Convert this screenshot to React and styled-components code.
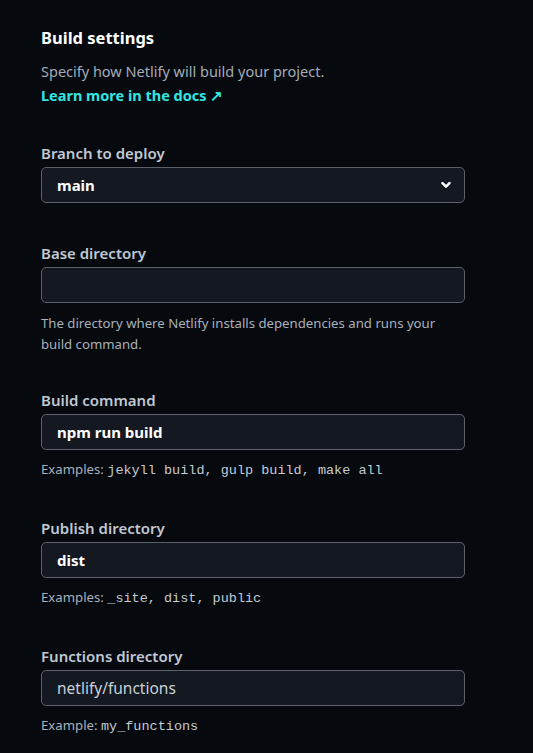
import React from 'react';
import styled, { createGlobalStyle } from 'styled-components';

const GlobalStyle = createGlobalStyle`
  html, body {
    margin: 0;
    padding: 0;
    background: #06090e;
  }
  body {
    font-family: "Noto Sans", "Open Sans", sans-serif;
    -webkit-font-smoothing: antialiased;
  }
`;

const Page = styled.div`
  width: 533px;
  min-height: 753px;
  background: #06090e;
  padding: 26px 68px 0 41px;
  box-sizing: border-box;
`;

const Title = styled.h2`
  margin: 0;
  font-size: 16.5px;
  font-weight: 700;
  color: #ffffff;
  line-height: 24px;
`;

const Intro = styled.p`
  margin: 9px 0 0;
  font-size: 14.5px;
  line-height: 24px;
  color: #a3acb6;
`;

const LinkRow = styled.p`
  margin: 0;
  line-height: 24px;
`;

const DocsLink = styled.a`
  font-size: 14.5px;
  font-weight: 700;
  color: #32e6e2;
  text-decoration: none;
`;

const Fields = styled.div`
  display: flex;
  flex-direction: column;
  margin-top: 35px;
`;

const Field = styled.div`
  display: flex;
  flex-direction: column;
  margin-bottom: ${(p) => p.$gap}px;
`;

const Label = styled.label`
  font-size: 15px;
  font-weight: 600;
  line-height: 22px;
  color: #c0c8d2;
  margin-bottom: 3px;
`;

const Box = styled.div`
  height: 36px;
  box-sizing: border-box;
  border: 1px solid #5b616b;
  border-radius: 5px;
  background: #131821;
  display: flex;
  align-items: center;
  padding: 0 15px;
`;

const Value = styled.span`
  font-size: ${(p) => (p.$placeholder ? 15.5 : 15)}px;
  font-weight: ${(p) => (p.$placeholder ? 400 : 700)};
  color: ${(p) => (p.$placeholder ? '#c9d0d8' : '#ffffff')};
  flex: 1;
`;

const Chevron = styled.svg`
  width: 12px;
  height: 12px;
  margin-right: -3px;
`;

const Help = styled.p`
  margin: ${(p) => (p.$tight ? 9 : 10)}px 0 0;
  font-size: 13.2px;
  line-height: 21px;
  color: #a9b1bb;
`;

const Code = styled.code`
  font-family: "Liberation Mono", "DejaVu Sans Mono", monospace;
  font-size: 13.5px;
  color: #c4cbd3;
`;

const fields = [
  { label: 'Branch to deploy', value: 'main', select: true, gap: 39 },
  {
    label: 'Base directory',
    value: '',
    help: 'The directory where Netlify installs dependencies and runs your build command.',
    gap: 34,
  },
  { label: 'Build command', value: 'npm run build', prefix: 'Examples:', code: 'jekyll build, gulp build, make all', gap: 36 },
  { label: 'Publish directory', value: 'dist', prefix: 'Examples:', code: '_site, dist, public', gap: 36 },
  { label: 'Functions directory', value: 'netlify/functions', placeholder: true, prefix: 'Example:', code: 'my_functions', gap: 0 },
];

export default function App() {
  return (
    <>
      <GlobalStyle />
      <Page>
        <Title>Build settings</Title>
        <Intro>Specify how Netlify will build your project.</Intro>
        <LinkRow>
          <DocsLink href="#">Learn more in the docs ↗</DocsLink>
        </LinkRow>
        <Fields>
          {fields.map((f) => (
            <Field key={f.label} $gap={f.gap}>
              <Label>{f.label}</Label>
              <Box>
                <Value $placeholder={f.placeholder}>{f.value}</Value>
                {f.select && (
                  <Chevron viewBox="0 0 12 12">
                    <path d="M2.5 4.2 L6 7.7 L9.5 4.2" fill="none" stroke="#ffffff" strokeWidth="2.6" strokeLinecap="round" strokeLinejoin="round" />
                  </Chevron>
                )}
              </Box>
              {f.help && <Help>{f.help}</Help>}
              {f.code && (
                <Help $tight>
                  {f.prefix} <Code>{f.code}</Code>
                </Help>
              )}
            </Field>
          ))}
        </Fields>
      </Page>
    </>
  );
}
